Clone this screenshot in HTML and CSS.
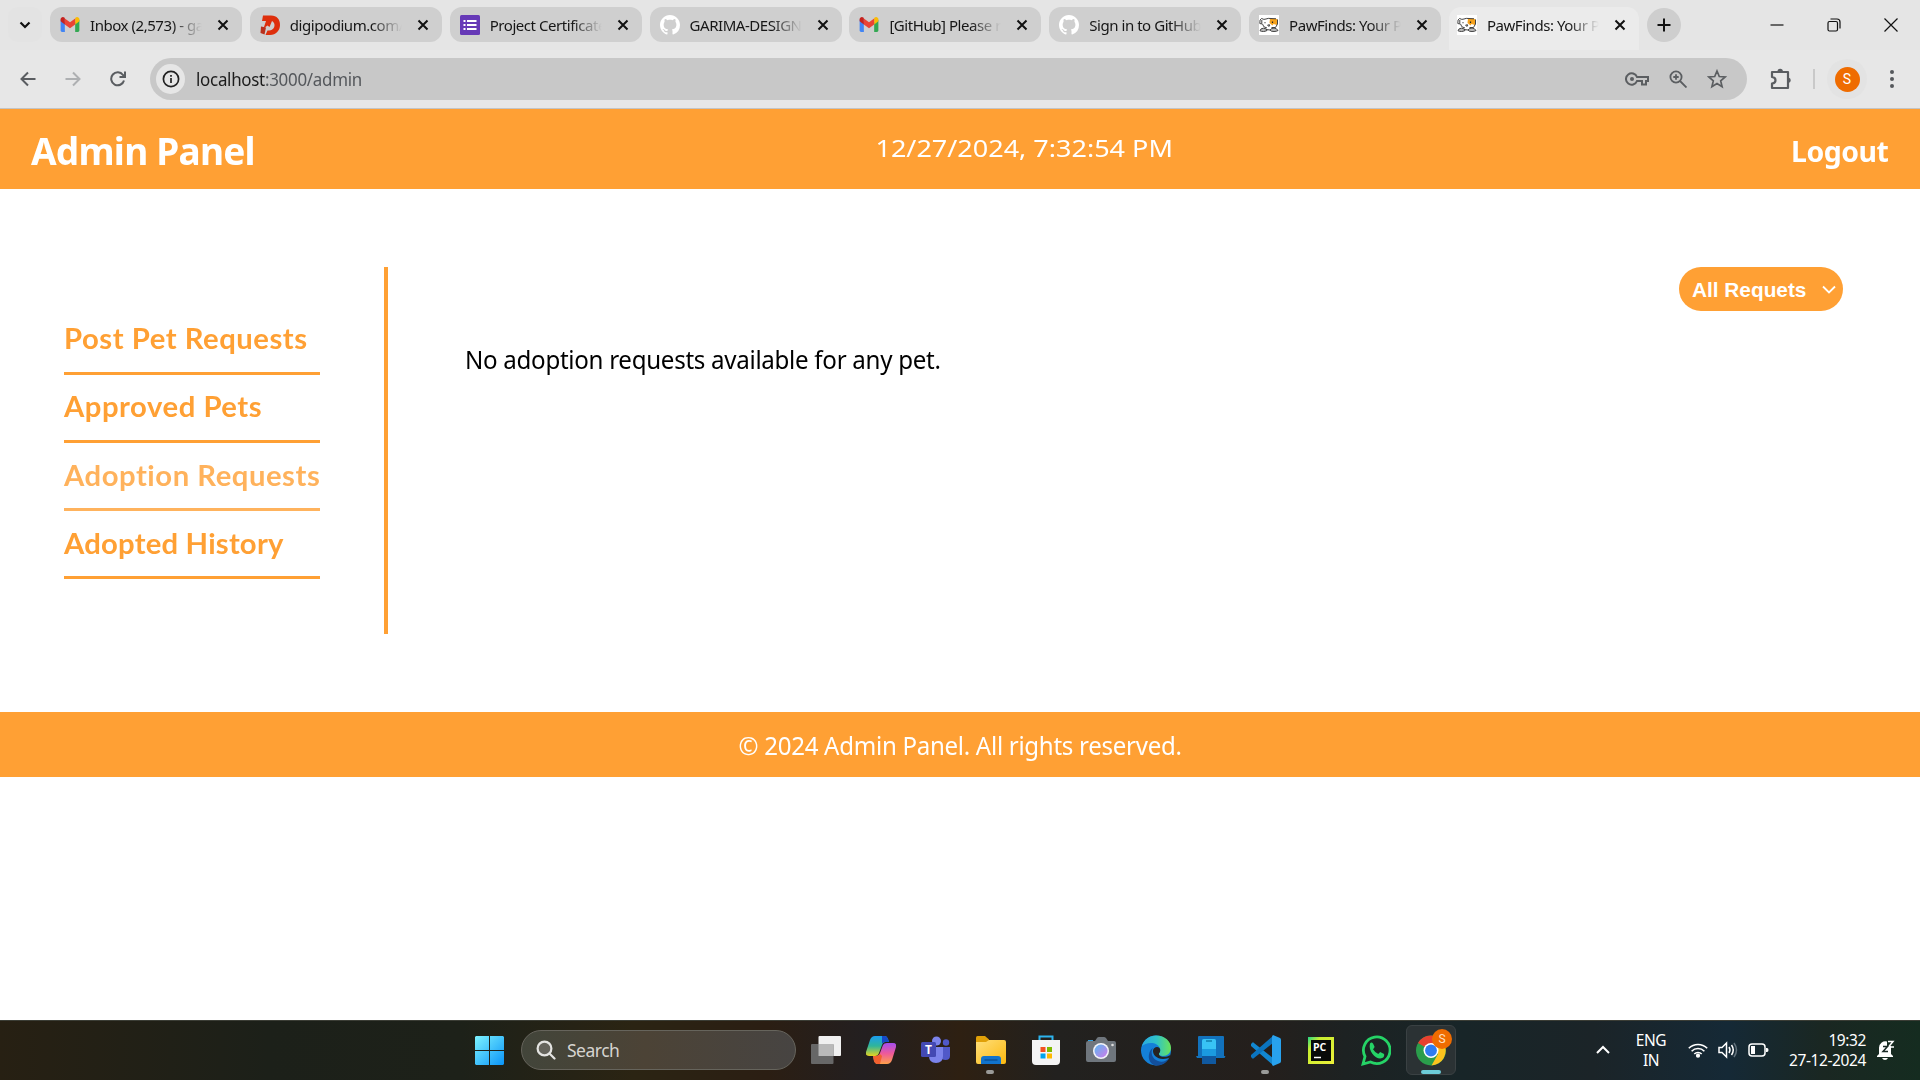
FILE: index.html
```html
<!DOCTYPE html>
<html lang="en">
<head>
<meta charset="utf-8">
<title>PawFinds: Your Pet Companion</title>
<link rel="stylesheet" href="styles.css">
</head>
<body>
<svg width="0" height="0" class="defs">
  <defs>
    <linearGradient id="win" x1="0" y1="0" x2="1" y2="1"><stop offset="0" stop-color="#7df3ff"/><stop offset="1" stop-color="#0a94f8"/></linearGradient>
    <linearGradient id="fold" x1="0" y1="0" x2="1" y2="1"><stop offset="0" stop-color="#ffdf7a"/><stop offset="1" stop-color="#fbb80f"/></linearGradient>
    <linearGradient id="lens" x1="0" y1="0" x2="1" y2="1"><stop offset="0" stop-color="#5ab8f0"/><stop offset="1" stop-color="#cf7bea"/></linearGradient>
    <linearGradient id="edgeTop" x1="0" y1="0" x2="1" y2="0"><stop offset="0" stop-color="#2aa9e0"/><stop offset=".5" stop-color="#2fc3c8"/><stop offset="1" stop-color="#6ae35a"/></linearGradient>
    <linearGradient id="copA" x1="0" y1="0" x2="0" y2="1"><stop offset="0" stop-color="#1b9df0"/><stop offset=".5" stop-color="#2fb59a"/><stop offset="1" stop-color="#e6d420"/></linearGradient>
    <linearGradient id="copB" x1="0" y1="0" x2="0" y2="1"><stop offset="0" stop-color="#a44df0"/><stop offset=".5" stop-color="#ee5a9a"/><stop offset="1" stop-color="#ffa04a"/></linearGradient>
    <linearGradient id="pyc" x1="0" y1="0" x2="1" y2="1"><stop offset="0" stop-color="#21d789"/><stop offset=".25" stop-color="#c8ee30"/><stop offset="1" stop-color="#eef03a"/></linearGradient>
    <symbol id="gmail" viewBox="0 0 20 16">
      <path d="M0 3v11.500C0 15.300.7 16 1.500 16H4.500V6z" fill="#4285f4"/>
      <path d="M15.500 6v10h3c.8 0 1.500-.7 1.500-1.500V3z" fill="#34a853"/>
      <path d="M15.500 1.500V8L20 4.600V2.500C20 .4 17.600-.7 16 .6z" fill="#fbbc04"/>
      <path d="M4.500 8V1.500L10 5.700l5.500-4.200V8L10 12z" fill="#ea4335"/>
      <path d="M0 2.500v2.100L4.500 8V1.500L4 .6C2.400-.7 0 .4 0 2.500z" fill="#c5221f"/>
    </symbol>
    <symbol id="github" viewBox="0 0 16 16">
      <path fill="#fff" d="M8 0C3.580 0 0 3.580 0 8c0 3.540 2.290 6.530 5.470 7.590.4.070.55-.17.55-.38 0-.19-.010-.82-.010-1.490-2.010.37-2.530-.49-2.690-.94-.09-.23-.48-.94-.82-1.130-.28-.15-.68-.52-.010-.53.63-.010 1.080.58 1.230.82.72 1.210 1.870.87 2.330.66.070-.52.28-.87.510-1.070-1.780-.2-3.640-.89-3.640-3.950 0-.87.310-1.590.82-2.150-.080-.2-.36-1.020.080-2.120 0 0 .67-.21 2.200.82.64-.18 1.320-.27 2-.27s1.360.09 2 .27c1.530-1.040 2.200-.82 2.200-.82.44 1.100.16 1.920.080 2.120.510.56.82 1.270.82 2.150 0 3.070-1.870 3.750-3.650 3.950.29.25.54.73.54 1.480 0 1.070-.010 1.930-.010 2.200 0 .21.15.46.55.38A8.010 8.010 0 0 0 16 8c0-4.420-3.580-8-8-8z"/>
    </symbol>
    <symbol id="paw" viewBox="0 0 20 20">
      <path fill="#fff" d="M0 0h20v20H0z"/>
      <path d="M11 3.500h5.500l2 1-.5 5.500-3.500-1-1 1.500-3-2.500z" fill="#f6a21c"/>
      <path d="M2.500 3.500Q.5 4 .8 8.500l2 .5V5M2.500 3.500Q5 5 7 4t5-.5l5 .3M3.500 9q.5 3.500 4.500 4M6 7v1.300M8.500 10.500q1.300 1.500 2.600 0M18.500 4.500V9l-2 3.500h-4" fill="none" stroke="#444" stroke-width="1"/>
      <path d="M13.500 6.500V8M8.700 10h2.300" stroke="#222" stroke-width="1.200"/>
      <path d="M1 15.700q.5-2.500 3.500-2.500 3 0 3.500 2.300-2 1-3.500 1-2.500 0-3.500-.8zM11 15q1.500-2 4-2t4 2.500q-1.500 1-4 1-3 .2-4-1.500zM7 14.500l4 .5" fill="#bbb" stroke="#444" stroke-width="1"/>
    </symbol>
    <symbol id="x" viewBox="0 0 12 12"><path d="M1.500 1.500l9 9M10.500 1.500l-9 9" stroke="#111" stroke-width="2" fill="none"/></symbol>
  </defs>
</svg>

<header class="browser">
  <div class="tabstrip">
    <button class="tabsearch"><svg width="12" height="8" viewBox="0 0 12 8"><path d="M1.500 1.500L6 6l4.500-4.500" fill="none" stroke="#111" stroke-width="2.200"/></svg></button>
    <div class="tab"><svg class="fav" width="20" height="15"><use href="#gmail"/></svg><span class="label">Inbox (2,573) - garima</span><svg class="close" width="12" height="12"><use href="#x"/></svg></div>
    <div class="tab"><svg class="fav" width="20" height="20" viewBox="0 0 20 20"><path d="M3 .5h8c6 0 9 4 9 9.500s-4 10-10 10H5.500l2-4.500c5 0 7-2 7-5.500 0-2-1-3-2.500-4l-2.500 6-2-1.500-4 3 2.500-7.500H2z" fill="#de2f0c"/><path d="M1 11.500l5 1-1.500 7L.5 18z" fill="#b8301c"/></svg><span class="label">digipodium.com/verify</span><svg class="close" width="12" height="12"><use href="#x"/></svg></div>
    <div class="tab"><svg class="fav" width="20" height="20" viewBox="0 0 20 20"><rect width="20" height="20" rx="1.500" fill="#673ab7"/><path d="M3.500 6h2M3.500 10h2M3.500 14h2M7 6h9.500M7 10h9.500M7 14h9.500" stroke="#fff" stroke-width="2"/></svg><span class="label">Project Certificate</span><svg class="close" width="12" height="12"><use href="#x"/></svg></div>
    <div class="tab"><svg class="fav" width="20" height="20"><use href="#github"/></svg><span class="label">GARIMA-DESIGNS</span><svg class="close" width="12" height="12"><use href="#x"/></svg></div>
    <div class="tab"><svg class="fav" width="20" height="15"><use href="#gmail"/></svg><span class="label">[GitHub] Please reset</span><svg class="close" width="12" height="12"><use href="#x"/></svg></div>
    <div class="tab"><svg class="fav" width="20" height="20"><use href="#github"/></svg><span class="label">Sign in to GitHub</span><svg class="close" width="12" height="12"><use href="#x"/></svg></div>
    <div class="tab"><svg class="fav" width="20" height="20"><use href="#paw"/></svg><span class="label">PawFinds: Your Pet</span><svg class="close" width="12" height="12"><use href="#x"/></svg></div>
    <div class="tab active"><svg class="fav" width="20" height="20"><use href="#paw"/></svg><span class="label">PawFinds: Your Pet</span><svg class="close" width="12" height="12"><use href="#x"/></svg></div>
    <button class="newtab"><svg width="14" height="14" viewBox="0 0 14 14"><path d="M7 .5v13M.5 7h13" stroke="#111" stroke-width="2"/></svg></button>
    <div class="winctl">
      <svg width="14" height="14" viewBox="0 0 14 14"><path d="M.5 7h13" stroke="#111" stroke-width="1.200"/></svg>
      <svg width="14" height="14" viewBox="0 0 14 14" fill="none" stroke="#111" stroke-width="1.200"><rect x="1" y="3.500" width="9.500" height="9.500" rx="1.500"/><path d="M3.500 1h6.500q3 0 3 3v6.500"/></svg>
      <svg width="14" height="14" viewBox="0 0 14 14"><path d="M.5.5l13 13M13.500.5l-13 13" stroke="#111" stroke-width="1.200"/></svg>
    </div>
  </div>
  <div class="toolbar">
    <div class="nav">
      <svg width="16" height="16" viewBox="0 0 16 16" fill="none" stroke="#5a5d61" stroke-width="2"><path d="M15.500 8H2M8 1.500L1.500 8 8 14.500"/></svg>
      <svg width="16" height="16" viewBox="0 0 16 16" fill="none" stroke="#aeb0b2" stroke-width="2"><path d="M.5 8H14M8 1.500L14.500 8 8 14.500"/></svg>
      <svg width="16" height="16" viewBox="0 0 16 16" fill="none" stroke="#5a5d61" stroke-width="2"><path d="M14 9.500A6.500 6.500 0 1 1 13 4l1.500 1.500M15 .5V6H9.500"/></svg>
    </div>
    <div class="omnibox">
      <span class="info"><svg width="18" height="18" viewBox="0 0 18 18"><circle cx="9" cy="9" r="7.600" fill="none" stroke="#222" stroke-width="1.700"/><path d="M9 8v5M9 5v1.700" stroke="#222" stroke-width="1.700"/></svg></span>
      <span class="url"><b>localhost</b>:3000/admin</span>
      <div class="actions">
        <svg width="24" height="14" viewBox="0 0 24 14" fill="none" stroke="#5b5e61" stroke-width="2"><path d="M12 5a5.700 5.700 0 1 0 0 4h5v3.500h4V9h2V5z"/><circle cx="7" cy="7" r="2" fill="#5b5e61" stroke="none"/></svg>
        <svg width="18" height="18" viewBox="0 0 18 18" fill="none" stroke="#5b5e61" stroke-width="1.800"><circle cx="7" cy="7" r="5.600"/><path d="M11 11l6.500 6.500M7 4.300v5.400M4.300 7h5.400"/></svg>
        <svg width="20" height="20" viewBox="0 0 20 20" fill="none" stroke="#5b5e61" stroke-width="1.700"><path d="M10 2l2.300 5.500 5.900.5-4.500 3.900 1.400 5.800L10 14.600l-5.100 3.100 1.400-5.800L1.800 8l5.900-.5z"/></svg>
      </div>
    </div>
    <svg class="ext" width="22" height="22" viewBox="0 0 22 22"><path d="M2 4h16v16H2v-4.500q3.500-.5 3.500-3.300T2 9z" fill="none" stroke="#5a5d61" stroke-width="2.200" stroke-linejoin="round"/><path d="M7.500 3.500a2.700 2.700 0 0 1 5.400 0zM18.500 9.500a2.800 2.800 0 0 1 0 5.500z" fill="#5a5d61"/></svg>
    <i class="sep"></i>
    <span class="profile"><span>S</span></span>
    <svg class="menu" width="4" height="18" viewBox="0 0 4 18" fill="#55585c"><circle cx="2" cy="2" r="2"/><circle cx="2" cy="9" r="2"/><circle cx="2" cy="16" r="2"/></svg>
  </div>
</header>

<div class="page">
  <div class="topbar">
    <h1>Admin Panel</h1>
    <p class="clock">12/27/2024, 7:32:54 PM</p>
    <button class="logout">Logout</button>
  </div>
  <main class="content">
    <nav class="sidebar">
      <a class="item"><span>Post Pet Requests</span></a>
      <a class="item"><span>Approved Pets</span></a>
      <a class="item current"><span>Adoption Requests</span></a>
      <a class="item history"><span>Adopted History</span></a>
    </nav>
    <section class="requests">
      <div class="filter"><span>All Requets</span><svg width="14" height="9" viewBox="0 0 14 9"><path d="M1 1.500l6 6 6-6" fill="none" stroke="#fff" stroke-width="1.800"/></svg></div>
      <p class="empty">No adoption requests available for any pet.</p>
    </section>
  </main>
  <footer class="footer"><span>© 2024 Admin Panel. All rights reserved.</span></footer>
</div>

<div class="taskbar">
  <div class="apps">
    <svg class="start" width="29" height="29" viewBox="0 0 29 29"><path d="M1 0h13v14H0V1zM15 0h13l1 1v13H15zM0 15h14v14H1l-1-1zM15 15h14v13l-1 1H15z" fill="url(#win)"/></svg>
    <div class="search"><svg width="20" height="20" viewBox="0 0 20 20" fill="none" stroke="#e4e4e2" stroke-width="2.200"><circle cx="8.500" cy="8.500" r="6.900" fill="#65645c"/><path d="M13.500 13.500l5 5" stroke-linecap="round"/></svg><span>Search</span></div>
    <div class="app"><svg width="30" height="28" viewBox="0 0 30 28"><rect x="7.500" width="22.500" height="20" rx="1" fill="#f0f0f0"/><rect y="8" width="22.500" height="20" rx="1" fill="#676767"/><path d="M7.500 8h15v12h-15z" fill="#b9b9b9"/></svg></div>
    <div class="app"><svg width="30" height="28" viewBox="0 0 30 28"><path d="M9 0h10q2 0 3 3l1 3h-4q-2 0-3 3l-3 8q-1 3-4 3H3q-4 0-3-4L4 4q1.500-4 5-4z" fill="url(#copA)"/><path d="M16 0h3q2 0 3 3l1 3h-4q-2 0-3 2z" fill="#1548c8"/><path d="M21 28H11q-2 0-3-3l-1-5h3q3 0 4-3l3-8q1-2 4-2h6q4 0 3 4l-4 13q-1.500 4-5 4z" fill="url(#copB)"/><path d="M14 28h-3q-2 0-3-3l-1-5h3q3 0 4-2l2 2z" fill="#f2602f"/></svg></div>
    <div class="app"><svg width="30" height="28" viewBox="0 0 30 28"><circle cx="15.500" cy="5" r="4.500" fill="#7b83eb"/><circle cx="25" cy="6.500" r="3.200" fill="#5059c9"/><path d="M20 11h9v9q0 4-4.500 4T20 20z" fill="#5059c9"/><path d="M8 11h14v9q0 7-7 7t-7-7z" fill="#7b83eb"/><rect y="6" width="15" height="15" rx="1.500" fill="#4349b3"/><text x="7.500" y="18" class="teams">T</text></svg></div>
    <div class="app run"><svg width="30" height="28" viewBox="0 0 30 28"><path d="M0 1.500Q0 0 1.500 0H9l4 3.500V8H0z" fill="#e0a008"/><path d="M0 6h10l3-2h15q2 0 2 2v20q0 2-2 2H2q-2 0-2-2z" fill="url(#fold)"/><path d="M5 28v-5q0-3 3-3h14q3 0 3 3v5z" fill="#1173cc"/><path d="M8.500 24h13" stroke="#0b4f94" stroke-width="1.400"/></svg></div>
    <div class="app"><svg width="30" height="31" viewBox="0 0 30 31"><path d="M8.500 7V1.500h13V7" fill="none" stroke="#2db4ee" stroke-width="2"/><path d="M1 5h28v21q0 4-4 4H5q-4 0-4-4z" fill="#f4f4f4"/><path d="M9.500 12h5v5h-5z" fill="#f25022"/><path d="M16 12h5v5h-5z" fill="#7fba00"/><path d="M9.500 18.500h5v5h-5z" fill="#00a4ef"/><path d="M16 18.500h5v5h-5z" fill="#ffb900"/></svg></div>
    <div class="app"><svg width="30" height="26" viewBox="0 0 30 26"><path d="M2 6V3h5v3z" fill="#2fa0e0"/><path d="M0 6q0-2 2-2h7l2-3q.5-1 2-1h5q1 0 2 1l2 3h6q2 0 2 2v17q0 2-2 2H2q-2 0-2-2z" fill="#6f767d"/><circle cx="15" cy="14" r="8" fill="#f3f3f8"/><circle cx="15" cy="14" r="6.500" fill="url(#lens)"/><circle cx="26.500" cy="8" r="1.300" fill="#ddd"/></svg></div>
    <div class="app"><svg width="30" height="31" viewBox="0 0 30 31"><circle cx="15" cy="15.500" r="15" fill="#1480d8"/><path d="M1 11C3 4 9 .5 15 .5c9 0 15 6 15 12.500 0 5-4 8-8 8-3 0-4.500-1.500-4.500-2.500 1.500-1.500 2-3 1.500-5C18 10 14 8 10 8S2.500 9.500 1 11z" fill="url(#edgeTop)"/><path d="M12 13c-3 4-1 11 5 13 4 1.500 8 .5 11-2.500-3 5-8 7.500-13 7-6-1-8-7-7-11 .5-3 2-5.500 4-6.500z" fill="#124f9c"/><path d="M18 18.500c1.500-1.500 1.700-4 .5-5.500-2-2-6-1-6.500 2.500-.3 4 3.500 8.500 10 8.500 3 0 5.500-1 6.500-1.500q1-1.500 1-2.500c-2.500 1.500-5 2-7 1.800-3 0-5-1.800-4.500-3.300z" fill="#262322"/></svg></div>
    <div class="app"><svg width="30" height="28" viewBox="0 0 30 28"><path d="M3 0h24q1 0 1 1v19h1.500l-1 2H1l-1-2h2V1q0-1 1-1z" fill="#1272bd"/><path d="M6 5q0-2 2-2h10q2 0 2 2v22q0 1-1 1H7q-1 0-1-1z" fill="#1b9be0"/><path d="M6 5q0-2 2-2h10q2 0 2 2v8H6z" fill="#38c3f5"/><path d="M6 20h14v8H6z" fill="#1059a0"/><path d="M10 5h6" stroke="#117fae" stroke-width="1.500"/></svg></div>
    <div class="app run"><svg width="30" height="31" viewBox="0 0 30 31"><path d="M3 8L22 23v7L0 11q-1-1 0-2l1.500-1.500q.7-.5 1.500.5z" fill="#1287d0"/><path d="M3 23L22 8V1L0 20q-1 1 0 2l1.500 1.500q.7.5 1.500-.5z" fill="#0b74bf"/><path d="M22 0l7 3q1 .5 1 2v21q0 1.500-1 2l-7 3q-1-1-1-2V2q0-1 1-2z" fill="#28a2ee"/></svg></div>
    <div class="app"><svg width="26" height="27" viewBox="0 0 26 27"><path d="M0 0h26v27H0z" fill="url(#pyc)"/><path d="M3 3h20v21H3z" fill="#080a08"/><text x="5" y="13.500" class="pc">PC</text><path d="M6 20.500h7" stroke="#fff" stroke-width="1.500"/></svg></div>
    <div class="app"><svg width="30" height="31" viewBox="0 0 30 31"><path d="M2 29l2-7.500A13.300 13.300 0 1 1 9.500 27z" fill="none" stroke="#25d366" stroke-width="2.800"/><path d="M9 8.500q1.500-2 3 0l1.500 3q.3 1-1.500 2.700 2 3.300 5.300 4.800l1.800-2 4 2q.8 4-4 4.500C14 23.500 7 16 9 8.500z" fill="#25d366"/></svg></div>
    <div class="app chrome"><svg width="30" height="31" viewBox="0 0 30 31"><circle cx="15" cy="15.500" r="15" fill="#2a9d4b"/><path d="M15 15.500L2 8A15 15 0 0 1 28 8z" fill="#e8402f"/><path d="M15 8.500h13A15 15 0 0 1 15.500 30.500L22 19z" fill="#fcc31e"/><circle cx="15" cy="15.500" r="7.500" fill="#fff"/><circle cx="15" cy="15.500" r="5.900" fill="#2f7cf0"/></svg><span class="badge">S</span></div>
  </div>
  <div class="tray">
    <svg class="chev" width="14" height="9" viewBox="0 0 14 9"><path d="M1 8l6-6 6 6" fill="none" stroke="#fff" stroke-width="2"/></svg>
    <div class="lang">ENG<br>IN</div>
    <svg class="wifi" width="20" height="16" viewBox="0 0 20 16" fill="none" stroke="#fff" stroke-width="1.600"><path d="M.8 6.300a13 13 0 0 1 18.400 0M3.600 9.200a9 9 0 0 1 12.800 0M6.300 12a5.200 5.200 0 0 1 7.400 0"/><circle cx="10" cy="13.700" r="1.300" fill="#fff"/></svg>
    <svg class="vol" width="20" height="18" viewBox="0 0 20 18" fill="none" stroke="#fff" stroke-width="1.500"><path d="M1 6.500h3L8.500 2v14L4 11.500H1z"/><path d="M11 6q2 3 0 6M13.500 4q3.500 5 0 10"/><path d="M16 2q5 7 0 14" stroke="#61717b"/></svg>
    <svg class="bat" width="21" height="14" viewBox="0 0 21 14"><rect x="1" y="1" width="16" height="12" rx="3" fill="none" stroke="#fff" stroke-width="1.500"/><path d="M3 3h4v8H3zM18 5h1q1.500 0 1.500 2T19 9h-1z" fill="#fff"/></svg>
    <div class="datetime">19:32<br>27-12-2024</div>
    <svg class="bell" width="18" height="20" viewBox="0 0 18 20"><path d="M2 8a6.500 6.500 0 0 1 8-6.500V6h4v8l2 2v1H0v-1l2-2zM5 18h6q-1 2-3 2t-3-2z" fill="#fff"/><path d="M11 1.500h5L11.500 7H17" fill="none" stroke="#fff" stroke-width="1.500"/><path d="M6 6.500h4.500L6 11.500h5" fill="none" stroke="#1a2a26" stroke-width="1.500"/></svg>
  </div>
</div>
</body>
</html>
```

FILE: styles.css
```css
* { box-sizing: border-box; margin: 0; padding: 0; }
body {
  width: 1920px; height: 1080px; overflow: hidden; background: #fff;
  display: flex; flex-direction: column;
  font-family: "Noto Sans", "Open Sans", sans-serif;
}
svg { display: block; flex: none; }
button { border: 0; background: none; font: inherit; }
.defs { position: absolute; }

/* browser */
.browser { height: 109px; flex: none; background: #e6e6e6; border-bottom: 1px solid #c4c4c4; }
.tabstrip { height: 50px; display: flex; align-items: flex-start; padding: 7px 0 0 8px; background: #e5e5e5; }
.tabsearch { width: 34px; height: 35px; margin-right: 8px; display: grid; place-items: center; border-radius: 10px; background: #e3e3e3; }
.tab { width: 192px; height: 35px; margin-right: 7.850px; padding: 0 13px 0 10px; display: flex; flex: none; align-items: center; border-radius: 12px; background: #cfcfcf; }
.tab .label {
  width: 113px; margin-left: 10px; margin-right: 14px; overflow: hidden; white-space: nowrap;
  font-size: 15px; letter-spacing: -0.45px; color: #161616;
  -webkit-mask-image: linear-gradient(90deg, #000 72%, transparent 99%);
  mask-image: linear-gradient(90deg, #000 72%, transparent 99%);
}
.tab.active { width: 190px; height: 43px; padding: 0 12px 8px 8px; border-radius: 12px 12px 0 0; background: #ebebeb; }
.newtab { width: 34px; height: 34px; margin-top: 1px; border-radius: 50%; background: #cecece; display: grid; place-items: center; }
.winctl { margin-left: auto; padding: 11px 22px 0 0; display: flex; gap: 43px; }
.toolbar { height: 58px; display: flex; align-items: center; background: #e7e7e7; }
.nav { width: 150px; padding-left: 20px; display: flex; gap: 29px; }
.omnibox { width: 1597px; height: 42px; border-radius: 21px; background: #c8c8c8; display: flex; align-items: center; padding-left: 6px; }
.info { width: 29px; height: 30px; border-radius: 50%; background: #e6e6e6; display: grid; place-items: center; }
.url { margin-left: 11px; font-size: 18px; letter-spacing: -0.3px; color: #55585c; transform: scaleX(.94); transform-origin: left; }
.url b { font-weight: 400; color: #1c1c1c; }
.actions { margin-left: auto; padding-right: 20px; display: flex; align-items: center; gap: 20px; }
.ext { margin-left: 23px; }
.sep { width: 2px; height: 20px; margin-left: 21px; background: #c9c9c9; }
.profile { width: 40px; height: 40px; margin-left: 12px; border-radius: 50%; background: #e3e3e3; display: grid; place-items: center; }
.profile span { width: 25px; height: 25px; border-radius: 50%; background: #ef6c00; color: #fff; font: 14px/25px Roboto, sans-serif; text-align: center; }
.menu { margin-left: 23px; }

/* page */
.page { flex: 1; }
.topbar { height: 80px; padding: 0 32px 0 31px; background: #ffa034; color: #fff; display: flex; justify-content: space-between; align-items: center; }
.topbar h1 { font-size: 38px; line-height: 52px; letter-spacing: -0.8px; padding-top: 1px; transform: scaleX(.975); transform-origin: left; }
.clock { font-size: 24px; line-height: 32px; padding-bottom: 2px; transform: scaleX(1.125); }
.logout { color: #fff; font-size: 29px; font-weight: 700; line-height: 40px; letter-spacing: -0.5px; padding-top: 3px; transform: scaleX(.98); transform-origin: right; }
.content { display: flex; padding: 78px 77px 78px 64px; }
.sidebar { width: 324px; height: 367px; padding: 40px 64px 0 0; border-right: 4px solid #ffa034; }
.item { display: flex; align-items: center; height: 68px; padding-bottom: 3px; border-bottom: 3px solid #ffa034; font: 700 28px/34px Lato, sans-serif; letter-spacing: .5px; font-variant-ligatures: none; color: #ffa034; white-space: nowrap; }
.item span { transform: scaleX(1.045); transform-origin: left; }
.item.current { opacity: .8; padding-bottom: 1px; }
.item.history { letter-spacing: .2px; padding-bottom: 1px; }
.requests { flex: 1; padding-left: 77px; display: flex; flex-direction: column; align-items: flex-start; }
.filter { align-self: flex-end; width: 164px; height: 44px; padding: 1px 7px 0 13px; border-radius: 22px; background: #ffa034; color: #fff; font: 700 20.800px/44px "Liberation Sans", sans-serif; display: flex; align-items: center; justify-content: space-between; white-space: nowrap; }
.empty { margin-top: 31px; font-size: 25px; line-height: 35px; letter-spacing: -0.3px; color: #000; transform: scaleX(.9645); transform-origin: left; }
.footer { height: 65px; padding-top: 1px; background: #ffa034; color: #fff; font-size: 25px; line-height: 65px; letter-spacing: -0.3px; text-align: center; }
.footer span { display: inline-block; transform: scaleX(.963); }

/* taskbar */
.taskbar {
  height: 60px; flex: none; border-top: 1px solid #3b3d35; display: flex; justify-content: space-between; color: #fff;
  background: linear-gradient(90deg, #272013 0, #1c2019 14%, #1d2119 24%, #2b2413 33%, #2b1e13 40%, #231f20 45%, #2e2012 50%, #22211f 55%, #241f1c 66%, #1d2222 70%, #182528 76%, #1b2428 83%, #152936 90%, #1a2722 95%, #152c20);
}
.apps { display: flex; align-items: center; padding: 0 0 1px 475px; }
.search { width: 275px; height: 40px; margin: 0 2px 0 17px; padding-left: 14px; border: 1px solid #66645c; border-radius: 20px; background: linear-gradient(90deg, #42453a, #4c4336 45%, #474442); display: flex; align-items: center; gap: 11px; font-size: 17.500px; color: #d6d4d0; letter-spacing: -0.5px; }
.app { width: 55px; height: 50px; display: grid; place-items: center; position: relative; }
.run::after, .chrome::after { content: ""; position: absolute; bottom: 1px; left: 23px; width: 8px; height: 4px; border-radius: 2px; background: #9a9a98; }
.chrome { width: 50px; margin-left: 3px; border: 1px solid #3a4143; border-radius: 6px; background: #2b3234; }
.chrome::after { left: 14px; width: 20px; bottom: 0; background: #6cccd8; }
.badge { position: absolute; left: 25px; top: 3px; width: 20px; height: 20px; border-radius: 50%; background: #ef6c00; font: 12px/20px Roboto, sans-serif; color: #ffe0c4; text-align: center; }
.teams { font: 700 12px "Open Sans", sans-serif; fill: #fff; text-anchor: middle; }
.pc { font: 700 10.500px "Open Sans", sans-serif; fill: #fff; }
.tray { display: flex; align-items: center; padding: 0 25px 2px 0; font-size: 15.500px; line-height: 20px; letter-spacing: -0.4px; }
.lang { width: 60px; margin: 0 7px 0 11px; text-align: center; }
.vol { margin-left: 10px; }
.bat { margin-left: 10px; }
.datetime { width: 90px; margin-left: 7px; white-space: nowrap; text-align: right; }
.bell { margin-left: 11px; }
```
